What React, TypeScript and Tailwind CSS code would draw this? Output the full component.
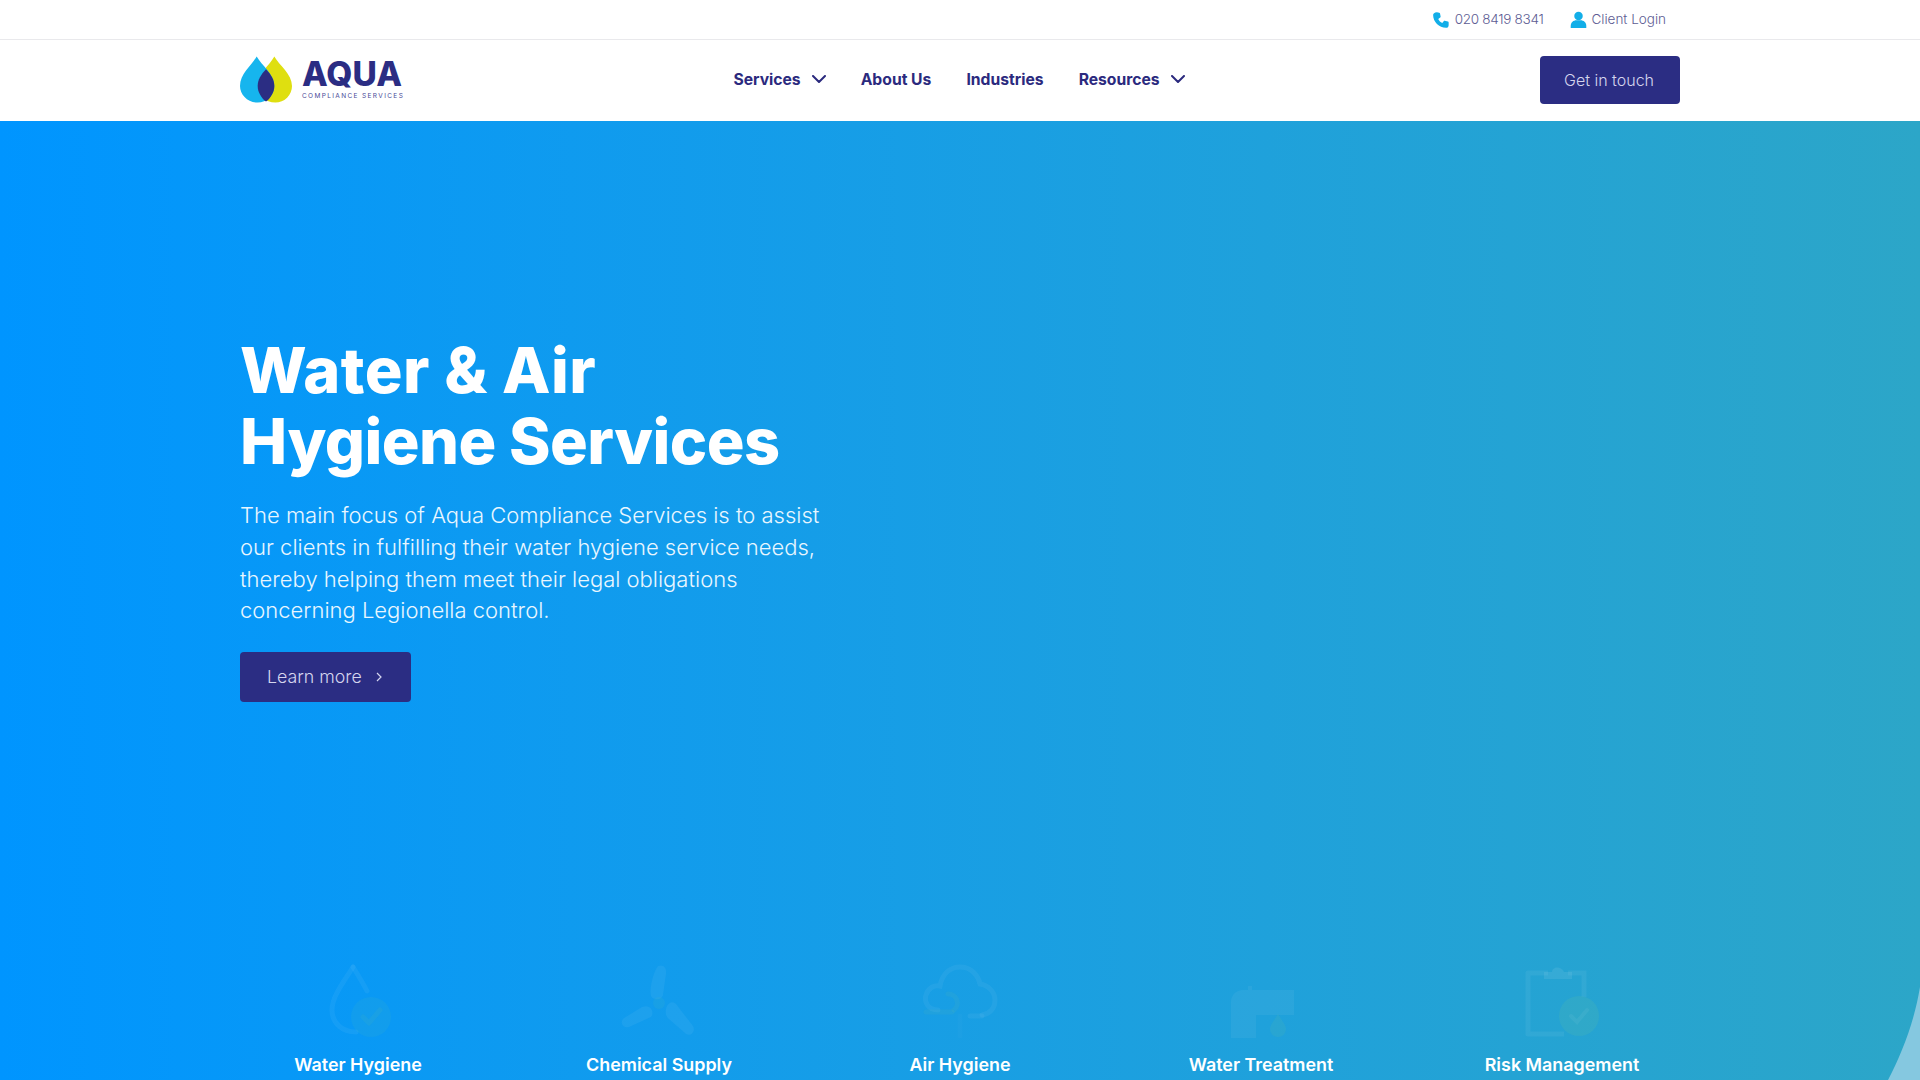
import React from 'react';

const DropIcon = () => (
  <svg viewBox="-4 0 66 74" className="w-[66px] h-[74px]" fill="none">
    <path d="M24 3C16 16 3 32 3 46c0 13 10 22 24 22" stroke="#fff" strokeOpacity="0.05" strokeWidth="5" strokeLinecap="round" />
    <path d="M24 3c5 8 10 16 14 24" stroke="#fff" strokeOpacity="0.05" strokeWidth="5" strokeLinecap="round" />
    <circle cx="42" cy="53" r="20" fill="#7fd08a" fillOpacity="0.07" />
    <path d="M34 53l6 6 11-13" stroke="#7fd08a" strokeOpacity="0.08" strokeWidth="5" strokeLinecap="round" strokeLinejoin="round" />
  </svg>
);

const FanIcon = () => (
  <svg viewBox="0 0 76 74" className="w-[76px] h-[74px]" fill="#fff" fillOpacity="0.05">
    <path d="M37 2c5-2 9 1 8 8l-3 21c-1 5-10 6-12 1-2-6 2-24 7-30z" />
    <path d="M46 42c2-4 6-5 9-2l17 22c3 5-2 11-7 8L48 55c-4-3-4-9-2-13z" />
    <path d="M28 43c3 1 5 7 2 10L8 63c-6 2-10-5-5-9l18-11c3-1 5-1 7 0z" />
    <circle cx="38" cy="39" r="6" fill="#7fd08a" fillOpacity="0.07" />
  </svg>
);

const CloudIcon = () => (
  <svg viewBox="0 0 76 74" className="w-[76px] h-[74px]" fill="none" stroke="#fff" strokeOpacity="0.05" strokeWidth="5" strokeLinecap="round">
    <path d="M16 46C6 46 2 38 4 31c2-7 8-10 14-9C20 10 28 3 38 3c11 0 18 8 20 17 8 1 15 8 15 16 0 9-6 14-13 15" />
    <path d="M48 52h12" />
    <path d="M4 48h26" stroke="#7fd08a" strokeOpacity="0.08" />
    <path d="M26 30a9 9 0 0 1 6 16" stroke="#7fd08a" strokeOpacity="0.08" />
    <path d="M38 52v22" strokeOpacity="0.02" />
  </svg>
);

const TapIcon = () => (
  <svg viewBox="0 0 66 74" className="w-[66px] h-[74px]" fill="#fff" fillOpacity="0.05">
    <path d="M15 26h5v-4h4v4h42v25H28v23H3V38C3 31 8 26 15 26z" />
    <path d="M50 50c4 7 8 11 8 15a8 8 0 0 1-16 0c0-4 4-8 8-15z" fill="#7fd08a" fillOpacity="0.1" />
  </svg>
);

const ClipboardIcon = () => (
  <svg viewBox="0 0 76 74" className="w-[76px] h-[74px]" fill="none">
    <path d="M24 9H4v61h36" stroke="#fff" strokeOpacity="0.06" strokeWidth="5" strokeLinejoin="round" />
    <path d="M44 9h16v24" stroke="#fff" strokeOpacity="0.06" strokeWidth="5" />
    <path d="M20 15V8h8c0-6 10-6 12 0h8v7z" fill="#fff" fillOpacity="0.08" />
    <circle cx="55" cy="52" r="20" fill="#7fd08a" fillOpacity="0.12" />
    <path d="M47 52l6 6 10-12" stroke="#fff" strokeOpacity="0.05" strokeWidth="4" strokeLinecap="round" />
  </svg>
);

const NavChevron = () => (
  <svg viewBox="0 0 14 8" className="w-[14px] h-[8px]" fill="none" stroke="currentColor" strokeWidth="2" strokeLinecap="round" strokeLinejoin="round">
    <path d="M1 1l6 6 6-6" />
  </svg>
);

const Logo = () => (
  <div className="w-[164px] flex items-center gap-[10px]">
    <svg viewBox="0 0 53 47" className="w-[52px] h-[47px] shrink-0">
      <path d="M35 0c5 9 18 18 18 30a17 17 0 0 1-17 17c-10 0-18-8-18-17C18 18 30 9 35 0z" fill="#dfdf10" />
      <path d="M17 0c5 9 18 18 18 30a17 17 0 0 1-17 17C8 47 0 39 0 30 0 18 12 9 17 0z" fill="#16b5ee" />
      <path d="M26.500 13c5 5 8.500 11 8.500 17 0 6-3.500 12-8.500 16C21.500 42 18 36 18 30c0-6 3.500-12 8.500-17z" fill="#2b2d83" />
    </svg>
    <div className="flex flex-col">
      <span className="text-[33.500px] leading-[30px] font-extrabold text-[#2b2d83]">AQUA</span>
      <span className="mt-[3px] text-[6.500px] leading-[8px] tracking-[0.21em] text-[#4a4a98] font-normal whitespace-nowrap">COMPLIANCE SERVICES</span>
    </div>
  </div>
);

const services = [
  { title: 'Water Hygiene', icon: <DropIcon /> },
  { title: 'Chemical Supply', icon: <FanIcon /> },
  { title: 'Air Hygiene', icon: <CloudIcon /> },
  { title: 'Water Treatment', icon: <TapIcon /> },
  { title: 'Risk Management', icon: <ClipboardIcon /> },
];

export default function App() {
  return (
    <div className="h-[1080px] overflow-hidden bg-white font-['Inter',sans-serif]">
      {/* Top bar */}
      <div className="h-10 border-b border-[#e9e9ec]">
        <div className="w-[1440px] mx-auto h-full flex items-center justify-end gap-[27px] pr-[14px] text-[13.500px] font-light text-[#5d5c93]">
          <div className="flex items-center gap-[5px]">
            <svg viewBox="0 0 24 24" className="w-[18px] h-[18px]" fill="#12aee8">
              <path d="M6.600 1.500l3 .7c.6.1 1 .5 1.100 1.100l.8 4c.1.500-.1 1-.5 1.300L8.300 10.500c1.200 2.500 3 4.300 5.400 5.400l1.900-2.300c.3-.4.800-.6 1.300-.5l4.300.9c.6.100 1 .6 1 1.200v3.800c0 2-1.500 3.500-3.500 3.500C9.500 22.500 1.500 14.500 1.500 5.400c0-2 1.700-3.900 5.100-3.900z" />
            </svg>
            <span className="tracking-[-0.3px]">020 8419 8341</span>
          </div>
          <div className="flex items-center gap-[4px]">
            <svg viewBox="0 0 24 24" className="w-[17px] h-[17px]" fill="#12aee8">
              <circle cx="12" cy="7" r="6" />
              <path d="M1 24v-3c0-5 4-8 8-8h6c4 0 8 3 8 8v3z" />
            </svg>
            <span>Client Login</span>
          </div>
        </div>
      </div>

      {/* Nav */}
      <header className="h-[81px] pb-[2px]">
        <div className="w-[1440px] mx-auto h-full flex items-center justify-between">
          <Logo />
          <nav className="flex items-center gap-[35px] text-[15.700px] font-bold text-[#2b2a7e] ml-[-26px]">
            <a className="flex items-center gap-[11px]">Services <NavChevron /></a>
            <a>About Us</a>
            <a>Industries</a>
            <a className="flex items-center gap-[11px]">Resources <NavChevron /></a>
          </nav>
          <button className="w-[140px] h-12 pr-[2px] rounded-[4px] bg-[#2b2d83] text-[16px] font-light text-[#d5d5ee]">Get in touch</button>
        </div>
      </header>

      {/* Hero */}
      <section className="relative h-[959px] overflow-hidden bg-gradient-to-r from-[#0095ff] to-[#2ca6c8]">
        <div className="w-[1440px] mx-auto pt-[214px]">
          <h1 className="text-[63px] leading-[71px] font-extrabold text-white">
            <span className="tracking-[0.45px]">Water &amp; Air</span><br />
            <span className="tracking-[-0.55px]">Hygiene Services</span>
          </h1>
          <p className="mt-[23px] w-[620px] text-[22px] leading-[31.800px] font-light text-[#e8f6ff]">
            The main focus of Aqua Compliance Services is to assist<br />
            our clients in fulfilling their water hygiene service needs,<br />
            thereby helping them meet their legal obligations<br />
            concerning Legionella control.
          </p>
          <button className="mt-[25px] w-[171px] h-[50px] pl-[27px] rounded-[4px] bg-[#2b2d83] text-[#d5d5ee] text-[17.800px] font-light flex items-center gap-[14px]">
            Learn more
            <svg viewBox="0 0 6 10" className="w-[6px] h-[10px]" fill="none" stroke="currentColor" strokeWidth="1.200">
              <path d="M1 1l4 4-4 4" />
            </svg>
          </button>

          <div className="mt-[262px] grid grid-cols-5 gap-[65px]">
            {services.map(s => (
              <div key={s.title} className="flex flex-col items-center">
                <div className="h-[74px] flex items-center justify-center">{s.icon}</div>
                <h3 className="mt-[15px] text-[17.900px] leading-[24px] font-semibold text-white">{s.title}</h3>
              </div>
            ))}
          </div>
        </div>
        <svg viewBox="0 0 32 93" className="absolute right-0 bottom-0 w-[32px] h-[93px]" fill="#85c8e0">
          <path d="M0 93C14 66 26 36 32 0v93z" />
        </svg>
      </section>
    </div>
  );
}
